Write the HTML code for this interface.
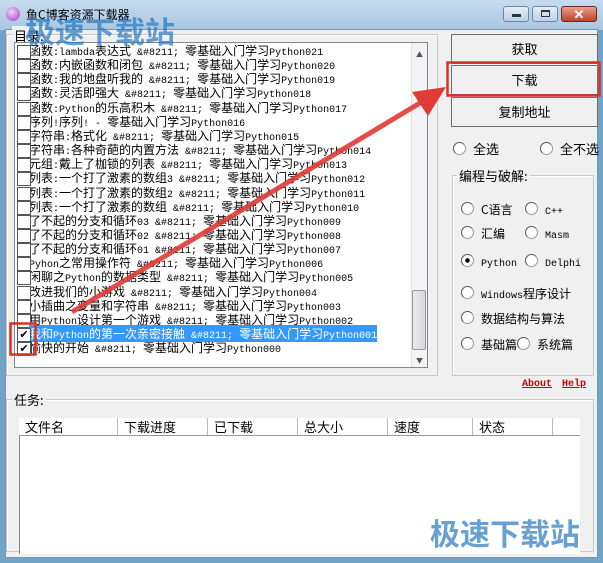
<!DOCTYPE html>
<html><head><meta charset="utf-8"><style>
*{margin:0;padding:0;box-sizing:border-box}
body{width:603px;height:563px;overflow:hidden;background:#6fa3c8;font:12px "Noto Sans CJK SC",sans-serif;color:#000;position:relative}
.a{position:absolute}
.m{font-family:"Liberation Mono",monospace;font-size:10px}
#title{left:0;top:0;width:603px;height:30px;background:linear-gradient(#c7dcee,#a9c6e2)}
#body{left:5px;top:29px;width:593px;height:529px;background:#f0f0f0;border:1px solid #7a95b0}
.grp{position:absolute;border:1px solid #c8c8c8;box-shadow:inset 1px 1px #fff}
.gl{position:absolute;background:#f0f0f0;padding:0 2px;font-size:13px}
#list{left:14px;top:42px;width:414px;height:326px;background:#fff;border:1px solid #828790}
.row{position:absolute;left:2px;height:14px;line-height:14px;white-space:nowrap;font-size:12px;padding-left:13px}
.row:before{content:"";position:absolute;left:1px;top:1px;width:12px;height:12px;border:1px solid #555;background:#fff}
.row.c:before{content:"✔";font-size:11px;line-height:10px;text-align:center;color:#000}
.sel span.t{background:#3399ff;color:#fff}
.btn{position:absolute;left:451px;width:147px;height:30px;border:1px solid #707070;background:#efefef;text-align:center;line-height:28px;font-size:13px}
.rd{position:absolute;font-size:12px;white-space:nowrap}
.rd:before{content:"";display:inline-block;width:11px;height:11px;border-radius:50%;border:1px solid #999;border-left-color:#555;border-top-color:#555;background:#fff;vertical-align:-1px;margin-right:7px}
.rd.on:before{background:radial-gradient(#000 2px,#fff 2.5px)}
.wm{position:absolute;font:bold 30px "Noto Sans CJK SC",sans-serif;color:rgba(40,120,190,.7);letter-spacing:0}
</style></head><body>
<div class="a" id="title"></div>
<div class="a" style="left:6px;top:7px;width:14px;height:14px;border-radius:50%;background:radial-gradient(circle at 40% 35%,#f0d0ff,#9a3fc0)"></div>
<div class="a" style="left:26px;top:6px;font-size:12px">鱼C博客资源下载器</div>
<div class="a" style="left:503px;top:6px;width:26px;height:16px;border:1px solid #6d86a0;border-radius:3px;background:linear-gradient(#e6eef7,#bcd0e4)"></div>
<div class="a" style="left:512px;top:14px;width:9px;height:3px;background:#333"></div>
<div class="a" style="left:532px;top:6px;width:26px;height:16px;border:1px solid #6d86a0;border-radius:3px;background:linear-gradient(#e6eef7,#bcd0e4)"></div>
<div class="a" style="left:541px;top:10px;width:9px;height:7px;border:1px solid #333;border-top-width:2px"></div>
<div class="a" style="left:561px;top:6px;width:36px;height:16px;border:1px solid #6b2a20;border-radius:3px;background:linear-gradient(#e8a08c,#c0412a);color:#fff;text-align:center;line-height:14px;font-weight:bold;font-size:13px">✕</div>
<div class="a" id="body"></div>

<div class="grp" style="left:6px;top:34px;width:432px;height:342px"></div>
<div class="gl" style="left:12px;top:26px">目录:</div>
<div class="a" id="list"></div>
<div class="a" style="left:411px;top:43px;width:16px;height:324px;background:#f3f3f3;border-left:1px solid #e0e0e0"></div>
<div class="a" style="left:416px;top:50px;font-size:7px;color:#555">▲</div>
<div class="a" style="left:416px;top:356px;font-size:7px;color:#555">▼</div>
<div class="a" style="left:412px;top:290px;width:14px;height:60px;background:linear-gradient(90deg,#eaeaea,#d8d8d8);border:1px solid #999;border-radius:2px"></div>
<div id="rows"></div>

<div class="btn" style="top:34px">获取</div>
<div class="btn" style="top:65px">下载</div>
<div class="btn" style="top:97px">复制地址</div>
<div class="rd" style="left:453px;top:139px;font-size:13px">全选</div>
<div class="rd" style="left:540px;top:139px;font-size:13px">全不选</div>
<div class="grp" style="left:452px;top:175px;width:142px;height:201px"></div>
<div class="gl" style="left:457px;top:166px">编程与破解:</div>
<div class="rd" style="left:461px;top:201px">C语言</div>
<div class="rd" style="left:525px;top:201px"><span class="m">C++</span></div>
<div class="rd" style="left:461px;top:225px">汇编</div>
<div class="rd" style="left:525px;top:225px"><span class="m">Masm</span></div>
<div class="rd on" style="left:461px;top:253px"><span class="m">Python</span></div>
<div class="rd" style="left:525px;top:253px"><span class="m">Delphi</span></div>
<div class="rd" style="left:461px;top:285px"><span class="m">Windows</span>程序设计</div>
<div class="rd" style="left:461px;top:310px">数据结构与算法</div>
<div class="rd" style="left:461px;top:336px">基础篇</div>
<div class="rd" style="left:517px;top:336px">系统篇</div>
<div class="a m" style="left:522px;top:379px;color:#c00;text-decoration:underline;font-weight:bold">About</div>
<div class="a m" style="left:562px;top:379px;color:#c00;text-decoration:underline;font-weight:bold">Help</div>

<div class="grp" style="left:6px;top:399px;width:588px;height:153px"></div>
<div class="gl" style="left:12px;top:390px">任务:</div>
<div class="a" style="left:19px;top:418px;width:561px;height:136px;background:#fff;border-left:1px solid #828790"></div>
<div class="a" style="left:19px;top:418px;width:561px;height:18px;background:#fff;border-bottom:1px solid #999;display:flex;font-size:13px;line-height:17px">
<div style="width:99px;border-right:1px solid #bbb;padding-left:6px">文件名</div>
<div style="width:90px;border-right:1px solid #bbb;padding-left:6px">下载进度</div>
<div style="width:90px;border-right:1px solid #bbb;padding-left:6px">已下载</div>
<div style="width:90px;border-right:1px solid #bbb;padding-left:6px">总大小</div>
<div style="width:85px;border-right:1px solid #bbb;padding-left:6px">速度</div>
<div style="width:80px;border-right:1px solid #bbb;padding-left:6px">状态</div>
</div>

<svg class="a" style="left:0;top:0" width="603" height="563">
<line x1="72" y1="312" x2="425" y2="100" stroke="#e03c35" stroke-width="5" opacity=".9"/>
<polygon points="446,87 412,92 428,116" fill="#e03c35"/>
<rect x="447.5" y="62.5" width="152" height="33" fill="none" stroke="#d9302a" stroke-width="2.5"/>
<rect x="10.5" y="323.5" width="25" height="31" fill="none" stroke="#d9302a" stroke-width="2.5"/>
</svg>
<div class="wm" style="left:25px;top:8px">极速下载站</div>
<div class="wm" style="left:430px;top:510px">极速下载站</div>
<script>
var L=["函数:lambda表达式 &#8211; 零基础入门学习Python021","函数:内嵌函数和闭包 &#8211; 零基础入门学习Python020","函数:我的地盘听我的 &#8211; 零基础入门学习Python019","函数:灵活即强大 &#8211; 零基础入门学习Python018","函数:Python的乐高积木 &#8211; 零基础入门学习Python017","序列!序列! - 零基础入门学习Python016","字符串:格式化 &#8211; 零基础入门学习Python015","字符串:各种奇葩的内置方法 &#8211; 零基础入门学习Python014","元组:戴上了枷锁的列表 &#8211; 零基础入门学习Python013","列表:一个打了激素的数组3 &#8211; 零基础入门学习Python012","列表:一个打了激素的数组2 &#8211; 零基础入门学习Python011","列表:一个打了激素的数组 &#8211; 零基础入门学习Python010","了不起的分支和循环03 &#8211; 零基础入门学习Python009","了不起的分支和循环02 &#8211; 零基础入门学习Python008","了不起的分支和循环01 &#8211; 零基础入门学习Python007","Pyhon之常用操作符 &#8211; 零基础入门学习Python006","闲聊之Python的数据类型 &#8211; 零基础入门学习Python005","改进我们的小游戏 &#8211; 零基础入门学习Python004","小插曲之变量和字符串 &#8211; 零基础入门学习Python003","用Python设计第一个游戏 &#8211; 零基础入门学习Python002","我和Python的第一次亲密接触 &#8211; 零基础入门学习Python001","愉快的开始 &#8211; 零基础入门学习Python000"];
var h="";function esc(s){return s.replace(/&/g,"&amp;").replace(/</g,"&lt;")}
L.forEach(function(t,i){var y=44+i*14.15;var c=i>=20?" c":"",s=i==20?" sel":"";
var inner=t.split(/([\x20-\x7e]+)/).map(function(p,j){return j%2?'<span class="m">'+esc(p)+'</span>':esc(p)}).join("");
h+='<div class="row'+c+s+'" style="top:'+y+'px;left:16px"><span class="t">'+inner+'</span></div>';});
document.getElementById("rows").innerHTML=h;
</script>
</body></html>
